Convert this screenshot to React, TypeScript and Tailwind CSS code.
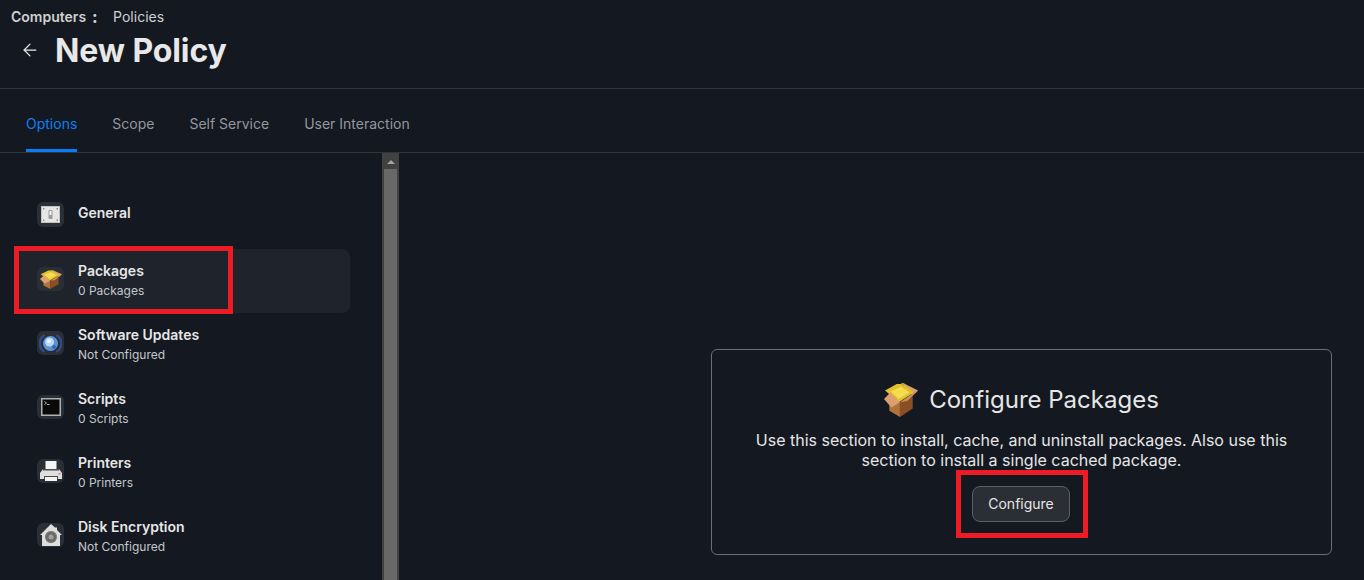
import React from 'react';
import { ArrowLeft } from 'lucide-react';

const BoxIcon = ({ width, height }: { width: number; height: number }) => (
  <svg width={width} height={height} viewBox="0 0 32 32" preserveAspectRatio="none">
    <path d="M18 0 L32 7 L27 12 L17 3 Z" fill="#d9a06e" />
    <path d="M1 7 L12 1 L18 1 L28 9 L14 18 Z" fill="#e3bf2b" />
    <path d="M6 8 L16 3.5 L24 9 L14 15 Z" fill="#f3dc4f" />
    <path d="M16 0 H19 L18 3 Z" fill="#8fae3a" />
    <path d="M5 19 L15 18 L15 32 L5 26 Z" fill="#b0713a" />
    <path d="M15 18 L27 12 L27 24 L15 32 Z" fill="#8a4f24" />
    <path d="M0 15 L6 9 L15 18 L7 23 Z" fill="#dc9f6d" />
    <path d="M28 9 L32 7 L22 17 L15 18 Z" fill="#cc8f5c" />
  </svg>
);

const GeneralIcon = () => (
  <svg width="19" height="17" viewBox="0 0 19 17">
    <rect width="19" height="17" fill="#e6e6e6" />
    <rect x="0.5" y="0.5" width="18" height="16" fill="none" stroke="#c2c2c2" />
    <rect x="7.5" y="4" width="4" height="9" rx="1" fill="#9a9a9a" />
    <rect x="8.5" y="5" width="2" height="4" fill="#f5f5f5" />
    <rect x="2" y="2" width="1.5" height="1.5" fill="#8c8c8c" />
    <rect x="15.5" y="2" width="1.5" height="1.5" fill="#8c8c8c" />
    <rect x="2" y="13.5" width="1.5" height="1.5" fill="#8c8c8c" />
    <rect x="15.5" y="13.5" width="1.5" height="1.5" fill="#8c8c8c" />
  </svg>
);

const GlobeIcon = () => (
  <svg width="23" height="23" viewBox="0 0 23 23">
    <path d="M5.5 3 A10 10 0 0 0 5.5 20" fill="none" stroke="#2f4a86" strokeWidth="2.5" />
    <path d="M17.5 3 A10 10 0 0 1 17.5 20" fill="none" stroke="#2f4a86" strokeWidth="2.5" />
    <circle cx="11.5" cy="11.5" r="7.5" fill="#5d93d8" />
    <circle cx="10.5" cy="10" r="4.5" fill="#b8d8f7" />
    <circle cx="10" cy="9" r="2" fill="#e8f3fd" />
    <circle cx="15" cy="15" r="2" fill="#3468b5" />
  </svg>
);

const TerminalIcon = () => (
  <svg width="20" height="18" viewBox="0 0 20 18">
    <rect width="20" height="18" fill="#b0b0b0" />
    <rect x="1.5" y="1.5" width="17" height="15" fill="#0a0a0a" />
    <path d="M3.5 3.5 L5.5 5 L3.5 6.5" fill="none" stroke="#e0e0e0" strokeWidth="0.8" />
    <path d="M6 6.5 H8.5" stroke="#e0e0e0" strokeWidth="0.8" />
  </svg>
);

const PrinterIcon = () => (
  <svg width="22" height="20" viewBox="0 0 22 20">
    <rect x="5.5" y="0" width="11" height="9" fill="#f4f4f4" />
    <path d="M3 8 H19 L22 12 V18 H0 V12 Z" fill="#dedede" />
    <rect x="3" y="8" width="16" height="1.5" fill="#4a4a4a" />
    <rect x="4" y="15" width="14" height="3" fill="#4a4a4a" />
    <rect x="5" y="16" width="12" height="4" fill="#f2f2f2" />
    <rect x="18.5" y="12" width="2" height="1.5" fill="#d77a7a" />
  </svg>
);

const HouseIcon = () => (
  <svg width="22" height="22" viewBox="0 0 22 22">
    <path d="M11 0 L15 3.5 H17 V6 L22 11 H20 V22 H2 V11 H0 Z" fill="#dedede" />
    <circle cx="11" cy="13" r="6" fill="#6a6a6a" />
    <circle cx="11" cy="13" r="2.5" fill="#9f9f9f" />
    <circle cx="11" cy="13" r="5.5" fill="none" stroke="#8f8f8f" strokeWidth="1" strokeDasharray="1.5 1.5" />
  </svg>
);

const navItems = [
  { title: 'Packages', sub: '0 Packages', icon: <BoxIcon width={22} height={19} />, active: true },
  { title: 'Software Updates', sub: 'Not Configured', icon: <GlobeIcon /> },
  { title: 'Scripts', sub: '0 Scripts', icon: <TerminalIcon /> },
  { title: 'Printers', sub: '0 Printers', icon: <PrinterIcon /> },
  { title: 'Disk Encryption', sub: 'Not Configured', icon: <HouseIcon /> },
];

const tabs = ['Options', 'Scope', 'Self Service', 'User Interaction'];

export default function App() {
  return (
    <div className="relative h-[580px] w-[1364px] overflow-hidden bg-[#141820] font-['Inter',sans-serif] text-[#e6e6e6]">
      {/* Header */}
      <div className="h-[89px] border-b border-[#32363c] pl-[11px] pt-[9px]">
        <div className="flex h-4 items-center text-sm leading-4 text-[#d0d0d0]">
          <span className="font-semibold">Computers</span>
          <span className="ml-[6px] w-[21px] text-base font-extrabold">:</span>
          <span>Policies</span>
        </div>
        <div className="mt-[4px] flex h-[44px] items-center">
          <ArrowLeft className="-mt-[2px] ml-[9px] h-[20px] w-[20px] text-[#e6e6e6]" strokeWidth={1.5} />
          <h1 className="ml-[15px] text-[32px] font-bold leading-[44px] tracking-[-0.1px] text-[#e8e8e8]">New Policy</h1>
        </div>
      </div>

      {/* Tabs */}
      <div className="flex h-[64px] gap-[35px] border-b border-[#32363c] pl-[26px]">
        {tabs.map((tab, i) => (
          <div
            key={tab}
            className={`-mb-px flex h-[63px] items-center border-b-[3px] pt-[9px] text-sm ${
              i === 0 ? 'border-[#0a7cf5] text-[#0f7ff5]' : 'border-transparent text-[#93979e]'
            }`}
          >
            {tab}
          </div>
        ))}
      </div>

      <div className="flex h-[427px]">
        {/* Sidebar */}
        <div className="w-[382px] pl-[18px] pr-[32px]">
          <div className="flex h-[96px] items-start pl-[19px] pt-[49px]">
            <div className="flex h-[25px] w-[27px] items-center justify-center rounded-md bg-[#2a2e35]">
              <GeneralIcon />
            </div>
            <span className="ml-[14px] mt-[3px] text-sm font-semibold leading-4 text-[#e6e6e6]">General</span>
          </div>
          {navItems.map((item) => (
            <div
              key={item.title}
              className={`flex h-[64px] items-center rounded-lg pl-[19px] ${item.active ? 'bg-[#1f232b]' : ''}`}
            >
              <div className="mb-1 flex h-[24px] w-[27px] items-center justify-center rounded-md bg-[#2a2e35]">{item.icon}</div>
              <div className="ml-[14px]">
                <div className="text-sm font-semibold leading-5 text-[#e6e6e6]">{item.title}</div>
                <div className="text-xs leading-5 text-[#c4c8ce]">{item.sub}</div>
              </div>
            </div>
          ))}
        </div>

        {/* Scrollbar */}
        <div className="flex h-full w-[17px] flex-col items-center bg-[#414141]">
          <div className="flex h-[17px] w-full items-center justify-center pt-[2px]">
            <div className="h-0 w-0 border-x-4 border-b-4 border-x-transparent border-b-[#a3a3a3]" />
          </div>
          <div className="h-full w-[13px] bg-[#686868]" />
        </div>

        {/* Content */}
        <div className="flex-1 pl-[312px] pr-[32px] pt-[196px]">
          <div className="flex h-[206px] flex-col items-center rounded-md border border-[#6b6e73] pt-[32px]">
            <div className="flex h-9 items-center">
              <BoxIcon width={34} height={34} />
              <h2 className="ml-[11px] text-2xl font-normal leading-9 text-[#e6e6e6]">Configure Packages</h2>
            </div>
            <p className="mt-[12px] w-[560px] text-center text-base leading-5 text-[#e6e6e6]">
              Use this section to install, cache, and uninstall packages. Also use this section to install a single cached package.
            </p>
            <button className="-ml-[2px] mt-[16px] h-9 w-[98px] rounded-lg border border-[#5c5f64] bg-[#2b2e35] pl-[1px] text-sm text-[#e6e6e6]">
              Configure
            </button>
          </div>
        </div>
      </div>

      {/* Red annotation boxes */}
      <div className="absolute left-[14px] top-[246px] h-[68px] w-[219px] border-[5px] border-[#ed1c24]" />
      <div className="absolute left-[956px] top-[470px] h-[68px] w-[132px] border-[5px] border-[#ed1c24]" />
    </div>
  );
}
